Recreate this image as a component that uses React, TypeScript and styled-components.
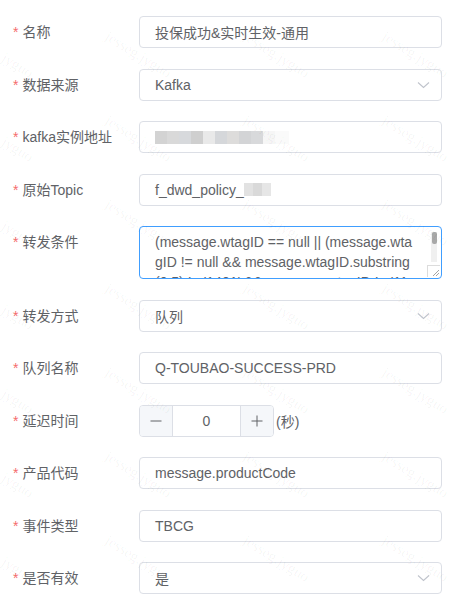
import React from "react";
import styled, { createGlobalStyle } from "styled-components";

const Global = createGlobalStyle`
  html, body { margin: 0; padding: 0; background: #fff; }
  body { font-family: "Liberation Sans", "Noto Sans CJK SC", sans-serif; }
  * { box-sizing: border-box; }
`;

const Page = styled.div`
  position: relative;
  width: 454px;
  height: 609px;
  overflow: hidden;
  background: #fff;
`;

const Form = styled.div`
  display: grid;
  grid-template-columns: 139px 303px;
  row-gap: 20.5px;
  padding-top: 16px;
`;

const Label = styled.div`
  height: 32px;
  line-height: 32px;
  padding-left: 13px;
  font-size: 14px;
  color: #606266;
  white-space: nowrap;
`;

const Star = styled.span`
  color: #f56c6c;
  margin-right: 4px;
`;

const Box = styled.div`
  position: relative;
  height: 32px;
  border: 1px solid #dcdfe6;
  border-radius: 4px;
  background: #fff;
  padding: 0 15px;
  display: flex;
  align-items: center;
  font-size: 14px;
  color: #606266;
  white-space: nowrap;
  overflow: hidden;
`;

const Value = styled.span`
  flex: 1;
`;

const Arrow = styled.svg`
  width: 13px;
  height: 8px;
  margin-right: -4px;
`;

const Mosaic = styled.div`
  display: flex;
  height: 13px;
`;

const Tile = styled.span<{ $c: string; $w?: number }>`
  width: ${(p) => p.$w ?? 12}px;
  height: 100%;
  background: ${(p) => p.$c};
`;

const TextArea = styled.div`
  position: relative;
  height: 53px;
  border: 1px solid #409eff;
  border-radius: 4px;
  padding: 5px 15px;
  font-size: 14px;
  line-height: 20px;
  color: #606266;
  overflow: hidden;
`;

const Line = styled.div`
  white-space: nowrap;
`;

const ScrollTrack = styled.div`
  position: absolute;
  right: 4px;
  top: 5px;
  width: 6px;
  height: 30px;
  background: #f0f0f0;
`;

const ScrollThumb = styled.div`
  width: 5px;
  height: 12px;
  margin-left: 0.5px;
  border-radius: 2px;
  background: #a8a8a8;
`;

const Resizer = styled.svg`
  position: absolute;
  right: 1px;
  bottom: 1px;
  width: 13px;
  height: 12px;
  background: #fff;
  border: 1px solid #dcdcdc;
  border-right: none;
  border-bottom: none;
`;

const Inline = styled.div`
  display: flex;
  align-items: center;
  height: 32px;
  font-size: 14px;
  color: #606266;
`;

const NumberBox = styled.div`
  width: 135px;
  height: 32px;
  border: 1px solid #dcdfe6;
  border-radius: 4px;
  display: flex;
  overflow: hidden;
`;

const Step = styled.div<{ $side: "l" | "r" }>`
  width: 33px;
  background: #f5f7fa;
  display: flex;
  align-items: center;
  justify-content: center;
  ${(p) => (p.$side === "l" ? "border-right: 1px solid #dcdfe6;" : "border-left: 1px solid #dcdfe6;")}
`;

const StepIcon = styled.svg`
  width: 12px;
  height: 12px;
`;

const NumVal = styled.div`
  flex: 1;
  display: flex;
  align-items: center;
  justify-content: center;
`;

const Unit = styled.span`
  margin-left: 2px;
`;

const Marks = styled.div`
  position: absolute;
  inset: 0;
  pointer-events: none;
`;

const Mark = styled.span`
  position: absolute;
  font-family: "Liberation Serif", serif;
  font-size: 15px;
  color: rgba(0, 0, 0, 0.045);
  transform: rotate(32deg);
  transform-origin: 0 0;
  white-space: nowrap;
`;

const ChevronDown = () => (
  <Arrow viewBox="0 0 13 8">
    <polyline points="1,1.5 6.5,6.5 12,1.5" fill="none" stroke="#c0c4cc" strokeWidth="1.1" />
  </Arrow>
);

const Field: React.FC<{ label: string; children: React.ReactNode }> = ({ label, children }) => (
  <>
    <Label>
      <Star>*</Star>
      {label}
    </Label>
    <div>{children}</div>
  </>
);

const mosaic1 = ["#d3d3d3", "#d9d9d9", "#d7d9dc", "#cfcfcf", "#e9e9e9", "#d5d7da", "#dddcdb", "#d3d4d6", "#d8d9db"];

export default function App() {
  const cols = [-35, 103, 241, 380];
  const rows = [0, 1, 2, 3, 4, 5, 6, 7].map((k) => 28 + 84 * k - 84);
  return (
    <Page>
      <Global />
      <Form>
        <Field label="名称">
          <Box>
            <Value>投保成功&amp;实时生效-通用</Value>
          </Box>
        </Field>
        <Field label="数据来源">
          <Box>
            <Value>Kafka</Value>
            <ChevronDown />
          </Box>
        </Field>
        <Field label="kafka实例地址">
          <Box>
            <Mosaic>
              {mosaic1.map((c, i) => (
                <Tile key={i} $c={c} />
              ))}
              <Tile $c="#f6f6f6" />
              <Tile $c="#fafafa" $w={14} />
            </Mosaic>
          </Box>
        </Field>
        <Field label="原始Topic">
          <Box>
            <span>f_dwd_policy_</span>
            <Mosaic>
              <Tile $c="#e2e2e2" $w={9} />
              <Tile $c="#d9d9d9" $w={9} />
              <Tile $c="#e6e6e6" $w={9} />
            </Mosaic>
          </Box>
        </Field>
        <Field label="转发条件">
          <TextArea>
            <Line>(message.wtagID == null || (message.wta</Line>
            <Line>gID != null &amp;&amp; message.wtagID.substring</Line>
            <Line>(0,5) != '1401' &amp;&amp; message.wtagID != '11</Line>
            <ScrollTrack>
              <ScrollThumb />
            </ScrollTrack>
            <Resizer viewBox="0 0 12 11">
              <line x1="11" y1="4" x2="5" y2="10" stroke="#9a9a9a" strokeWidth="0.9" />
              <line x1="11" y1="7" x2="8" y2="10" stroke="#9a9a9a" strokeWidth="0.9" />
            </Resizer>
          </TextArea>
        </Field>
        <Field label="转发方式">
          <Box>
            <Value>队列</Value>
            <ChevronDown />
          </Box>
        </Field>
        <Field label="队列名称">
          <Box>
            <Value>Q-TOUBAO-SUCCESS-PRD</Value>
          </Box>
        </Field>
        <Field label="延迟时间">
          <Inline>
            <NumberBox>
              <Step $side="l">
                <StepIcon viewBox="0 0 12 12">
                  <line x1="0.5" y1="6" x2="11.5" y2="6" stroke="#606266" strokeWidth="1" />
                </StepIcon>
              </Step>
              <NumVal>0</NumVal>
              <Step $side="r">
                <StepIcon viewBox="0 0 12 12">
                  <line x1="0.5" y1="6" x2="11.5" y2="6" stroke="#606266" strokeWidth="1" />
                  <line x1="6" y1="0.5" x2="6" y2="11.5" stroke="#606266" strokeWidth="1" />
                </StepIcon>
              </Step>
            </NumberBox>
            <Unit>(秒)</Unit>
          </Inline>
        </Field>
        <Field label="产品代码">
          <Box>
            <Value>message.productCode</Value>
          </Box>
        </Field>
        <Field label="事件类型">
          <Box>
            <Value>TBCG</Value>
          </Box>
        </Field>
        <Field label="是否有效">
          <Box>
            <Value>是</Value>
            <ChevronDown />
          </Box>
        </Field>
      </Form>
      <Marks>
        {rows.map((y) =>
          cols.map((x) => (
            <Mark key={`${x}-${y}`} style={{ left: x + 8, top: y }}>
              jesseg.jyguo
            </Mark>
          ))
        )}
      </Marks>
    </Page>
  );
}
